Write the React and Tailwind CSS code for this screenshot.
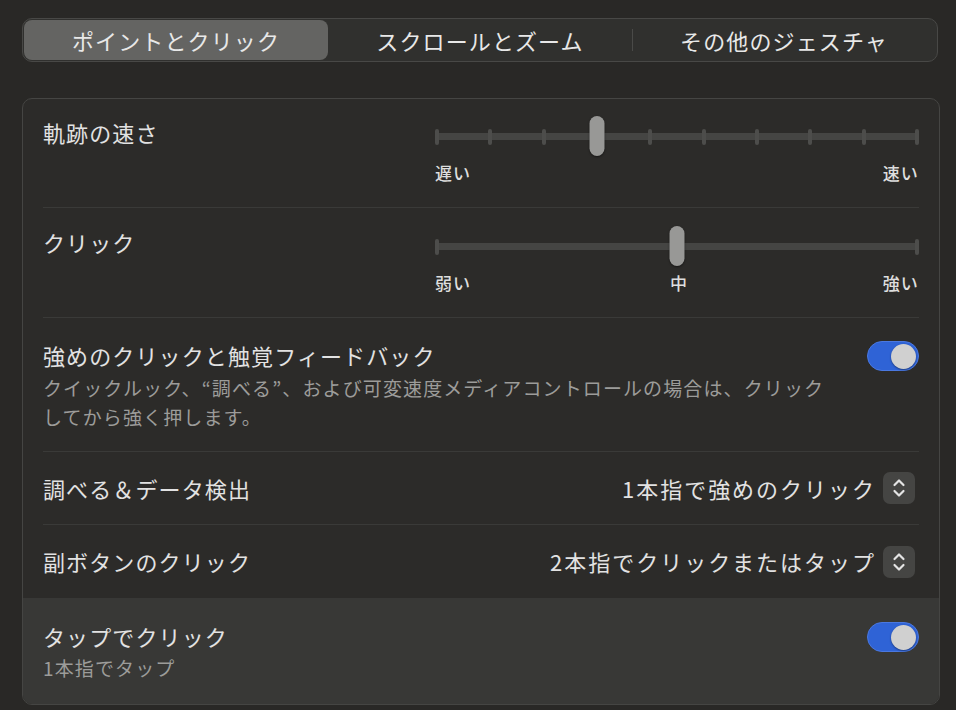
import React from 'react';

const TABS = ['ポイントとクリック', 'スクロールとズーム', 'その他のジェスチャ'];

// Stepped slider with optional tick marks and labels underneath
const Slider = ({ value, steps, ticks, labels }) => {
  const pct = (value / (steps - 1)) * 100;
  return (
    <div className="w-[484px]">
      <div className="relative h-[40px]">
        <div className="absolute left-0 right-0 top-[17px] h-[7px] rounded-full bg-[#454543]" />
        {Array.from({ length: steps }).map((_, i) =>
          ticks || i === 0 || i === steps - 1 ? (
            <div
              key={i}
              className="absolute top-[13px] h-[16px] w-[4px] -translate-x-1/2 rounded-full bg-[#4d4d4b]"
              style={{ left: `calc(2px + ${(i / (steps - 1)) * 100}% - ${(i / (steps - 1)) * 4}px)` }}
            />
          ) : null
        )}
        <div
          className="absolute top-0 h-[40px] w-[15px] -translate-x-1/2 rounded-full bg-[#989896] shadow-[0_1px_2px_rgba(0,0,0,0.5)]"
          style={{ left: `calc(2px + ${pct}% - ${(pct / 100) * 4}px)` }}
        />
      </div>
      <div className="mt-[6px] flex justify-between text-[17px] font-medium leading-[22px] text-[#dedede]">
        {labels.map((l) => (
          <span key={l} className={l === '中' ? 'relative left-[2px]' : ''}>{l}</span>
        ))}
      </div>
    </div>
  );
};

const Toggle = () => (
  <div className="flex h-[30px] w-[52px] items-center justify-end rounded-full border border-[#4a78e0] bg-[#2f63d6] px-[2px]">
    <div className="h-[25px] w-[25px] rounded-full bg-[#d0d0d0] shadow-[0_1px_2px_rgba(0,0,0,0.4)]" />
  </div>
);

const Stepper = () => (
  <div className="flex h-[32px] w-[32px] items-center justify-center rounded-[7px] bg-[#454543]">
    <svg width="14" height="22" viewBox="0 0 14 22" fill="none" stroke="#e4e4e4" strokeWidth="2.2" strokeLinecap="round" strokeLinejoin="round">
      <path d="M2.5 8 L7 3.5 L11.5 8" />
      <path d="M2.5 14 L7 18.5 L11.5 14" />
    </svg>
  </div>
);

const PopupRow = ({ title, value, tall }) => (
  <div className={`mx-[20px] flex items-center justify-between border-t border-[#3a3a38] ${tall ? 'h-[74px]' : 'h-[73px]'}`}>
    <span className="text-[22px] text-[#e2e2e2]">{title}</span>
    <div className="mr-[4px] flex items-center gap-[7px]">
      <span className="text-[22px] tracking-[0.09em] text-[#e2e2e2]">{value}</span>
      <Stepper />
    </div>
  </div>
);

export default function App() {
  return (
    <div
      className="min-h-[710px] w-[956px] bg-[#292826] px-[22px] pt-[18px] tracking-[0.07em]"
      style={{ fontFamily: '"Noto Sans CJK JP", "Noto Sans", sans-serif' }}
    >
      {/* Segmented tabs */}
      <div className="flex h-[44px] w-[916px] items-center rounded-[10px] border border-[#484846] bg-[#30302e] p-[1px]">
        {TABS.map((t, i) => (
          <div key={t} className="relative flex h-[40px] flex-1 items-center justify-center">
            {i === 0 && <div className="absolute inset-0 rounded-[8px] bg-[#646462]" />}
            {i === 2 && <div className="absolute left-0 top-[9px] h-[22px] w-[1px] bg-[#4a4a48]" />}
            <span className="relative text-[22px] text-[#e8e8e8]">{t}</span>
          </div>
        ))}
      </div>

      {/* Settings panel */}
      <div className="mt-[36px] w-[918px] overflow-hidden rounded-[10px] border border-[#454543] bg-[#2c2b29]">
        <div className="mx-[20px] flex justify-between pb-[23px] pt-[17px]">
          <span className="text-[22px] leading-[32px] text-[#e2e2e2]">軌跡の速さ</span>
          <Slider value={3} steps={10} ticks labels={['遅い', '速い']} />
        </div>

        <div className="mx-[20px] flex justify-between border-t border-[#3a3a38] pb-[23px] pt-[18px]">
          <span className="text-[22px] leading-[32px] text-[#e2e2e2]">クリック</span>
          <Slider value={1} steps={3} labels={['弱い', '中', '強い']} />
        </div>

        <div className="mx-[20px] flex items-start justify-between border-t border-[#3a3a38] pb-[20px] pt-[21px]">
          <div>
            <div className="text-[22px] leading-[32px] text-[#e2e2e2]">強めのクリックと触覚フィードバック</div>
            <div className="mt-[2px] max-w-[800px] text-[19px] leading-[29px] text-[#9c9c9a]">
              クイックルック、“調べる”、および可変速度メディアコントロールの場合は、クリックしてから強く押します。
            </div>
          </div>
          <div className="mt-[2px]">
            <Toggle />
          </div>
        </div>

        <PopupRow title="調べる＆データ検出" value="1本指で強めのクリック" />
        <PopupRow title="副ボタンのクリック" value="2本指でクリックまたはタップ" tall />

        <div className="flex items-start justify-between bg-[#383836] px-[20px] pb-[20px] pt-[22px]">
          <div>
            <div className="text-[22px] leading-[32px] text-[#e2e2e2]">タップでクリック</div>
            <div className="text-[19px] leading-[32px] text-[#9c9c9a]">1本指でタップ</div>
          </div>
          <div className="mt-[2px]">
            <Toggle />
          </div>
        </div>
      </div>
    </div>
  );
}
